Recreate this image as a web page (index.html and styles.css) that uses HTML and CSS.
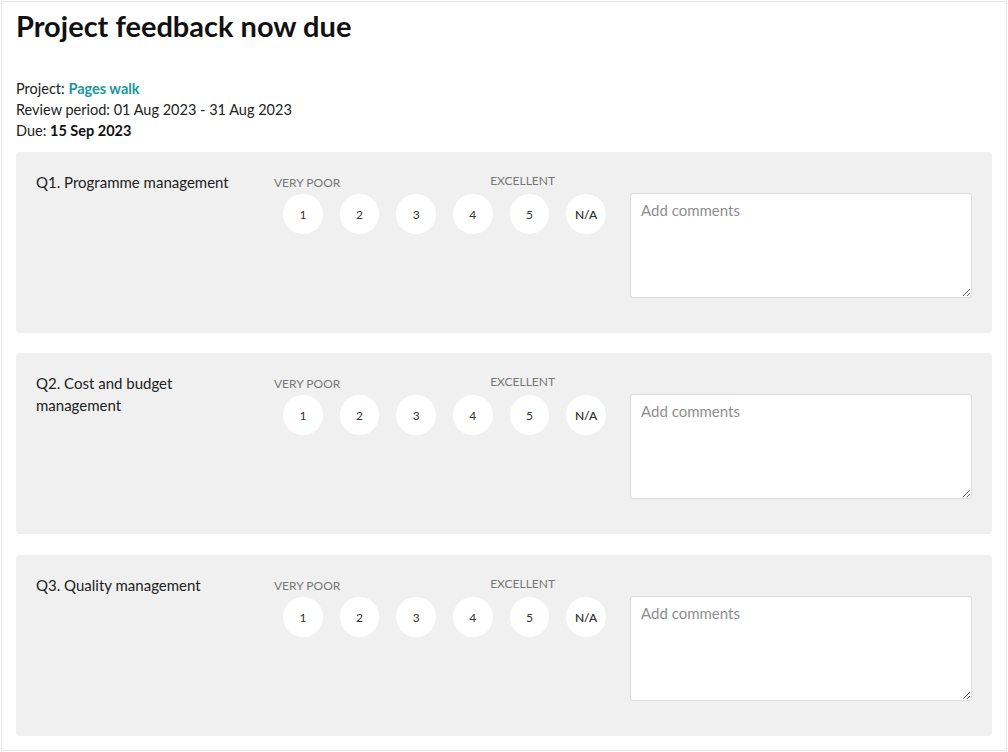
FILE: index.html
```html
<!DOCTYPE html>
<html lang="en">
<head>
    <meta charset="UTF-8">
    <meta name="viewport" content="width=device-width, initial-scale=1.0">
    <title>Project feedback now due</title>
    <link rel="stylesheet" href="styles.css">
</head>
<body>
<div class="page">
    <h1>Project feedback now due</h1>

    <div class="meta">
        <div>Project: <a class="project-link" href="#">Pages walk</a></div>
        <div>Review period: 01 Aug 2023 - 31 Aug 2023</div>
        <div>Due: <strong>15 Sep 2023</strong></div>
    </div>

    <!-- Q1 -->
    <div class="question">
        <div class="question-title">Q1. Programme management</div>
        <div class="rating">
            <div class="rating-labels">
                <span class="label-low">VERY POOR</span>
                <span class="label-high">EXCELLENT</span>
            </div>
            <div class="rating-options">
                <button type="button" class="option">1</button>
                <button type="button" class="option">2</button>
                <button type="button" class="option">3</button>
                <button type="button" class="option">4</button>
                <button type="button" class="option">5</button>
                <button type="button" class="option option-na">N/A</button>
            </div>
        </div>
        <textarea class="comments" placeholder="Add comments"></textarea>
    </div>

    <!-- Q2 -->
    <div class="question">
        <div class="question-title">Q2. Cost and budget management</div>
        <div class="rating">
            <div class="rating-labels">
                <span class="label-low">VERY POOR</span>
                <span class="label-high">EXCELLENT</span>
            </div>
            <div class="rating-options">
                <button type="button" class="option">1</button>
                <button type="button" class="option">2</button>
                <button type="button" class="option">3</button>
                <button type="button" class="option">4</button>
                <button type="button" class="option">5</button>
                <button type="button" class="option option-na">N/A</button>
            </div>
        </div>
        <textarea class="comments" placeholder="Add comments"></textarea>
    </div>

    <!-- Q3 -->
    <div class="question">
        <div class="question-title">Q3. Quality management</div>
        <div class="rating">
            <div class="rating-labels">
                <span class="label-low">VERY POOR</span>
                <span class="label-high">EXCELLENT</span>
            </div>
            <div class="rating-options">
                <button type="button" class="option">1</button>
                <button type="button" class="option">2</button>
                <button type="button" class="option">3</button>
                <button type="button" class="option">4</button>
                <button type="button" class="option">5</button>
                <button type="button" class="option option-na">N/A</button>
            </div>
        </div>
        <textarea class="comments" placeholder="Add comments"></textarea>
    </div>
</div>
</body>
</html>
```

FILE: styles.css
```css
body {
    margin: 1px;
    font-family: Lato, "Open Sans", Arial, sans-serif;
    color: #222;
    background: #fff;
}
.page {
    height: 750px;
    box-sizing: border-box;
    border: 1px solid #e6e6e6;
    padding: 0 14px;
}
h1 {
    margin: 0;
    padding-top: 7px;
    font-size: 29px;
    line-height: 34px;
    font-weight: 700;
    color: #111;
}
.meta {
    margin-top: 35px;
    font-size: 14.5px;
    line-height: 21px;
    color: #222;
}
.project-link {
    color: #1a979e;
    font-weight: 700;
    text-decoration: none;
}
.meta strong {
    color: #111;
}
.question {
    display: flex;
    align-items: flex-start;
    margin-top: 11px;
    padding: 19px 20px 35px;
    background: #f0f0f0;
    border-radius: 3px;
}
.question + .question {
    margin-top: 20px;
}
.question:last-child {
    margin-top: 21px;
}
.question-title {
    width: 200px;
    margin-right: 38px;
    font-size: 15px;
    line-height: 22px;
    color: #222;
}
.rating {
    width: 332px;
    margin-top: 1px;
}
.rating-labels {
    display: flex;
    width: 281px;
    justify-content: space-between;
    align-items: flex-start;
    font-size: 12px;
    line-height: 18px;
    color: #777;
}
.label-low {
    margin-top: 2px;
}
.rating-options {
    display: flex;
    gap: 16.8px;
    margin-top: 2px;
    padding-left: 9px;
}
.option {
    width: 40px;
    height: 40px;
    padding: 0;
    border: none;
    border-radius: 50%;
    background: #fff;
    font-family: inherit;
    font-size: 12px;
    color: #333;
    cursor: pointer;
}
.option-na {
    font-weight: 600;
}
.comments {
    flex: 1;
    height: 105px;
    box-sizing: border-box;
    margin-top: 22px;
    margin-left: 24px;
    padding: 7px 10px;
    border: 1px solid #dcdcdc;
    border-radius: 3px;
    font-family: inherit;
    font-size: 15px;
    color: #222;
    background: #fff;
}
.comments::placeholder {
    color: #8e8e8e;
}
```
